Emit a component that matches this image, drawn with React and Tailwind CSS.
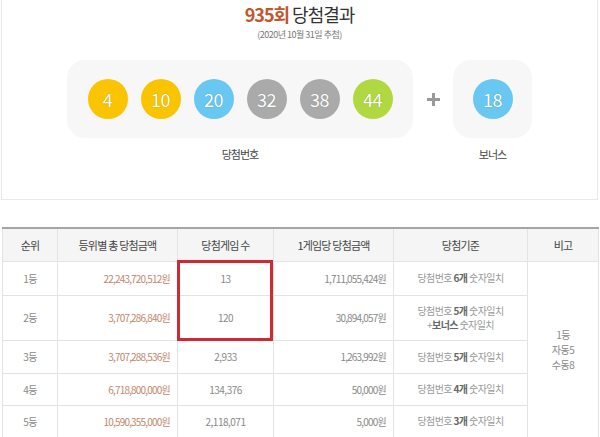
import React from 'react';

const balls = [
  { n: 4, color: 'bg-[#fbc400]' },
  { n: 10, color: 'bg-[#fbc400]' },
  { n: 20, color: 'bg-[#69c8f2]' },
  { n: 32, color: 'bg-[#aaaaaa]' },
  { n: 38, color: 'bg-[#aaaaaa]' },
  { n: 44, color: 'bg-[#b0d840]' },
];

const rows = [
  { rank: '1등', total: '22,243,720,512원', count: '13', each: '1,711,055,424원', h: 'h-[34px]', crit: [['당첨번호 ', '6개', ' 숫자일치']] },
  { rank: '2등', total: '3,707,286,840원', count: '120', each: '30,894,057원', h: 'h-[45px]', crit: [['당첨번호 ', '5개', ' 숫자일치'], ['+', '보너스', ' 숫자일치']] },
  { rank: '3등', total: '3,707,288,536원', count: '2,933', each: '1,263,992원', h: 'h-[33px]', crit: [['당첨번호 ', '5개', ' 숫자일치']] },
  { rank: '4등', total: '6,718,800,000원', count: '134,376', each: '50,000원', h: 'h-[32px]', crit: [['당첨번호 ', '4개', ' 숫자일치']] },
  { rank: '5등', total: '10,590,355,000원', count: '2,118,071', each: '5,000원', h: 'h-[32px]', crit: [['당첨번호 ', '3개', ' 숫자일치']] },
];

const Ball = ({ n, color }) => (
  <div className={`w-[40px] h-[40px] rounded-full ${color} flex items-center justify-center text-white text-[18px] leading-none tracking-[-0.5px] [text-shadow:0_0_1px_rgba(0,0,0,0.35)]`}>
    {n}
  </div>
);

export default function App() {
  return (
    <div className="w-[600px] h-[437px] bg-white overflow-hidden font-['Noto_Sans_CJK_KR','Noto_Sans',sans-serif]">
      {/* draw result box */}
      <div className="ml-[1px] w-[597px] h-[200px] border border-t-0 border-[#e9e9e9] flex flex-col items-center">
        <div className="pt-[3px] text-[18px] leading-[22px] tracking-[-1px]">
          <span className="text-[#c0562e] font-semibold">935회</span>
          <span className="text-[#333]"> 당첨결과</span>
        </div>
        <div className="mt-[4px] text-[9px] leading-[12px] tracking-[-0.5px] text-[#777]">(2020년 10월 31일 추첨)</div>

        <div className="mt-[19px] flex items-start gap-[14px]">
          <div className="flex flex-col items-center">
            <div className="w-[346px] h-[78px] rounded-[18px] bg-[#f7f7f7] flex items-center justify-center gap-[13px]">
              {balls.map((b) => (
                <Ball key={b.n} n={b.n} color={b.color} />
              ))}
            </div>
            <div className="mt-[9px] text-[11px] leading-[14px] tracking-[-1px] text-[#444]">당첨번호</div>
          </div>
          <div className="h-[78px] flex items-center mr-[-1px]">
            <svg width="13" height="13" viewBox="0 0 13 13">
              <rect x="5" y="0" width="3" height="13" fill="#999" />
              <rect x="0" y="5" width="13" height="3" fill="#999" />
            </svg>
          </div>
          <div className="flex flex-col items-center">
            <div className="w-[79px] h-[78px] rounded-[18px] bg-[#f7f7f7] flex items-center justify-center">
              <Ball n={18} color="bg-[#69c8f2]" />
            </div>
            <div className="mt-[9px] text-[11px] leading-[14px] tracking-[-1px] text-[#444]">보너스</div>
          </div>
        </div>
      </div>

      {/* prize table */}
      <div className="relative mt-[27px] ml-[2px] w-[596px]">
        <table className="w-[596px] table-fixed border-collapse text-[10px] text-[#888]">
          <colgroup>
            <col className="w-[55px]" />
            <col className="w-[120px]" />
            <col className="w-[96px]" />
            <col className="w-[120px]" />
            <col className="w-[134px]" />
            <col className="w-[71px]" />
          </colgroup>
          <thead>
            <tr className="h-[33px] bg-[#f5f5f5] border-t-2 border-t-[#a5a5a5] text-[11px] tracking-[-0.8px] text-[#444]">
              <th className="font-normal border border-t-0 border-[#e3e3e3]">순위</th>
              <th className="font-normal border border-t-0 border-[#e3e3e3]">등위별 총 당첨금액</th>
              <th className="font-normal border border-t-0 border-[#e3e3e3]">당첨게임 수</th>
              <th className="font-normal border border-t-0 border-[#e3e3e3]">1게임당 당첨금액</th>
              <th className="font-normal border border-t-0 border-[#e3e3e3]">당첨기준</th>
              <th className="font-normal border border-t-0 border-[#e3e3e3]">비고</th>
            </tr>
          </thead>
          <tbody>
            {rows.map((r, i) => (
              <tr key={r.rank} className={r.h}>
                <td className="border border-[#e3e3e3] text-center tracking-[-0.5px]">{r.rank}</td>
                <td className="border border-[#e3e3e3] text-right pr-[7px] tracking-[-0.8px] text-[#c4866b]">{r.total}</td>
                <td className="border border-[#e3e3e3] text-center tracking-[-0.5px]">{r.count}</td>
                <td className="border border-[#e3e3e3] text-right pr-[7px] tracking-[-0.8px]">{r.each}</td>
                <td className="border border-[#e3e3e3] text-center tracking-[-0.6px] leading-[14px] text-[#999]">
                  {r.crit.map((c, j) => (
                    <div key={j}>
                      {c[0]}
                      <span className="font-bold text-[#666]">{c[1]}</span>
                      {c[2]}
                    </div>
                  ))}
                </td>
                {i === 0 && (
                  <td rowSpan={5} className="border border-[#e3e3e3] text-center leading-[15px] tracking-[-0.5px]">
                    <div>1등</div>
                    <div>자동5</div>
                    <div>수동8</div>
                  </td>
                )}
              </tr>
            ))}
          </tbody>
        </table>
        {/* highlight box */}
        <div className="absolute left-[175px] top-[33px] w-[96px] h-[81px] border-[3px] border-[#cf2a33]" />
      </div>
    </div>
  );
}
